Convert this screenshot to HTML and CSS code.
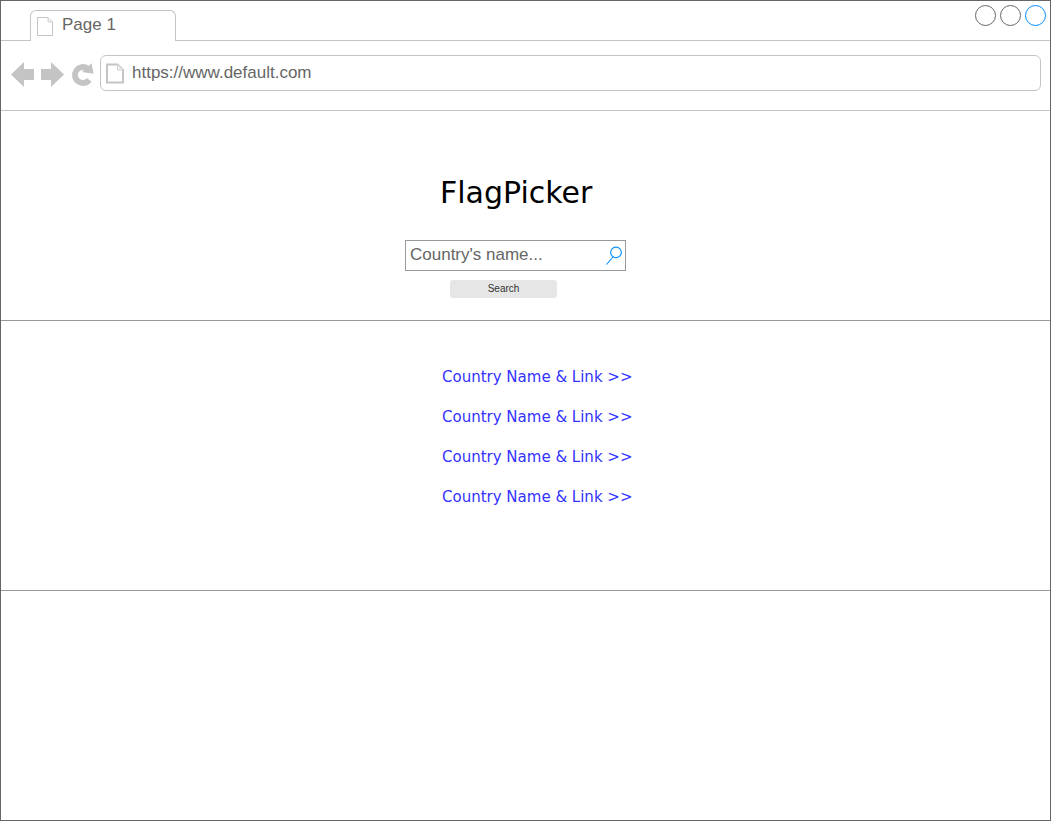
FILE: index.html
```html
<!DOCTYPE html>
<html lang="en">
<head>
<meta charset="utf-8">
<title>FlagPicker</title>
<link rel="stylesheet" href="styles.css">
</head>
<body>
<div class="window">
  <header class="tabbar">
    <div class="gap-left"></div>
    <div class="tab">
      <svg class="tab-icon" width="18" height="20" viewBox="0 0 18 20"><path d="M1.500 .500h10.500l4.500 4.500v13.500h-15z" fill="none" stroke="#c4c4c4"/><path d="M12 .500v4.500h4.500" fill="#eee" stroke="#d4d4d4"/></svg>
      <span class="tab-title">Page 1</span>
    </div>
    <div class="controls">
      <span class="dot"></span><span class="dot"></span><span class="dot dot-active"></span>
    </div>
  </header>
  <nav class="toolbar">
    <svg class="nav-icons" width="84" height="26" viewBox="0 0 84 26" fill="#c4c4c4">
      <path d="M0 13.500L13 1V8H23V19H13V26z"/>
      <path d="M53 13.500L40 1V8H30V19H40V26z"/>
      <path d="M76.500 7.400A8 8 0 1 0 78.300 18.900" fill="none" stroke="#c4c4c4" stroke-width="5.800"/>
      <path d="M80.500 2.300L82.700 12.800L70.800 11z"/>
    </svg>
    <div class="address">
      <svg class="page-icon" width="20" height="22" viewBox="0 0 20 22"><path d="M2 1.500h10.500l5.500 5.500v12.500h-16z" fill="none" stroke="#c4c4c4" stroke-width="2"/><path d="M12.500 1.500v5.500h5.500" fill="#eee" stroke="#d4d4d4"/></svg>
      <span class="url">https://www.default.com</span>
    </div>
  </nav>
  <section class="hero">
    <h1 class="title">FlagPicker</h1>
    <div class="search">
      <span class="placeholder">Country's name...</span>
      <svg class="search-icon" width="18" height="20" viewBox="0 0 18 20" fill="none" stroke="#008cff" stroke-width="1.100"><circle cx="11" cy="6.400" r="5.300"/><path d="M8 11L1.500 18.500"/></svg>
    </div>
    <button class="button">Search</button>
  </section>
  <main class="results">
    <a class="link">Country Name &amp; Link &gt;&gt;</a>
    <a class="link">Country Name &amp; Link &gt;&gt;</a>
    <a class="link">Country Name &amp; Link &gt;&gt;</a>
    <a class="link">Country Name &amp; Link &gt;&gt;</a>
  </main>
</div>
</body>
</html>
```
FILE: styles.css
```css
* { box-sizing: border-box; }
body { margin: 0; background: #fff; }
.window {
  width: 1051px;
  height: 821px;
  border: 1px solid #666;
  font-family: "Liberation Sans", Arial, sans-serif;
  color: #666;
}
.tabbar { display: flex; height: 40px; }
.gap-left { width: 29px; border-bottom: 1px solid #c4c4c4; }
.tab {
  display: flex;
  width: 146px;
  height: 31px;
  margin-top: 9px;
  padding: 6px 0 0 5px;
  border: 1px solid #c4c4c4;
  border-bottom: 0;
  border-radius: 6px 6px 0 0;
}
.tab-title { margin: -1px 0 0 8px; font-size: 17px; line-height: 18px; }
.controls {
  flex: 1;
  display: flex;
  justify-content: flex-end;
  gap: 4px;
  padding: 4px 4px 0 0;
  border-bottom: 1px solid #c4c4c4;
}
.dot { width: 21px; height: 21px; border: 1px solid #666; border-radius: 50%; }
.dot-active { border-color: #008cff; }
.toolbar {
  display: flex;
  height: 70px;
  padding: 14px 9px 0 10px;
  border-bottom: 1px solid #c4c4c4;
}
.nav-icons { flex: none; margin: 6px 5px 0 0; }
.address {
  display: flex;
  flex: 1;
  height: 36px;
  padding: 7px 0 0 4px;
  border: 1px solid #c4c4c4;
  border-radius: 6px;
}
.url { margin-left: 7px; font-size: 17px; line-height: 20px; }
.hero {
  display: flex;
  flex-direction: column;
  height: 210px;
  padding: 64px 0 0 404px;
  border-bottom: 1px solid #999;
}
.title {
  margin: 0 0 29px 35px;
  font: 400 30px/36px "DejaVu Sans", Verdana, sans-serif;
  color: #000;
}
.search {
  display: flex;
  justify-content: space-between;
  width: 221px;
  height: 31px;
  padding: 5px 2px 0 4px;
  border: 1px solid #999;
}
.placeholder { font-size: 17px; line-height: 18px; }
.button {
  width: 107px;
  height: 18px;
  margin: 9px 0 0 45px;
  padding: 0;
  border: 0;
  border-radius: 3px;
  background: #e6e6e6;
  font: 10px/18px "Liberation Sans", Arial, sans-serif;
  color: #333;
}
.results {
  display: flex;
  flex-direction: column;
  height: 270px;
  padding: 36px 0 0 441px;
  border-bottom: 1px solid #999;
}
.link {
  height: 40px;
  font: 15px/40px "DejaVu Sans", Verdana, sans-serif;
  color: #33f;
}
```
